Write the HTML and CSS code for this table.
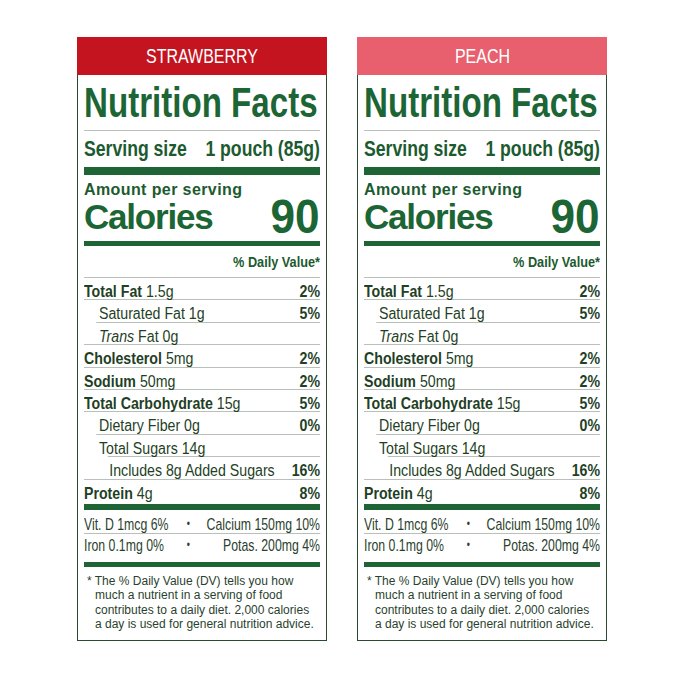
FILE: index.html
```html
<!DOCTYPE html>
<html>
<head>
<meta charset="utf-8">
<link rel="stylesheet" href="styles.css">
</head>
<body>
<div class="page">
  <section class="panel">
    <div class="flavor flavor-strawberry"><span class="flavor-text">STRAWBERRY</span></div>
    <div class="card">
      <h1 class="title">Nutrition Facts</h1>
      <div class="rule"></div>
      <div class="serving cond"><span>Serving size</span><span>1 pouch (85g)</span></div>
      <div class="bar bar-8"></div>
      <div class="amount">Amount per serving</div>
      <div class="calories"><span class="cal-label">Calories</span><span class="cal-num">90</span></div>
      <div class="bar bar-5"></div>
      <div class="dv cond">% Daily Value*</div>
      <div class="rows cond">
        <div class="row"><span><b>Total Fat</b> 1.5g</span><b>2%</b></div>
        <div class="row ind"><span>Saturated Fat 1g</span><b>5%</b></div>
        <div class="row ind-line"><span><i>Trans</i> Fat 0g</span></div>
        <div class="row"><span><b>Cholesterol</b> 5mg</span><b>2%</b></div>
        <div class="row"><span><b>Sodium</b> 50mg</span><b>2%</b></div>
        <div class="row"><span><b>Total Carbohydrate</b> 15g</span><b>5%</b></div>
        <div class="row ind"><span>Dietary Fiber 0g</span><b>0%</b></div>
        <div class="row ind-line"><span>Total Sugars 14g</span></div>
        <div class="row ind2"><span>Includes 8g Added Sugars</span><b>16%</b></div>
        <div class="row"><span><b>Protein</b> 4g</span><b>8%</b></div>
      </div>
      <div class="bar bar-6"></div>
      <div class="vits">
        <div class="vit vit-first"><span>Vit. D 1mcg 6%</span><span class="dot">•</span><span class="vr">Calcium 150mg 10%</span></div>
        <div class="vit vit-second"><span>Iron 0.1mg 0%</span><span class="dot">•</span><span class="vr">Potas. 200mg 4%</span></div>
      </div>
      <div class="bar bar-last"></div>
      <p class="foot">* The % Daily Value (DV) tells you how<br>much a nutrient in a serving of food<br>contributes to a daily diet. 2,000 calories<br>a day is used for general nutrition advice.</p>
    </div>
  </section>
  <section class="panel">
    <div class="flavor flavor-peach"><span class="flavor-text">PEACH</span></div>
    <div class="card">
      <h1 class="title">Nutrition Facts</h1>
      <div class="rule"></div>
      <div class="serving cond"><span>Serving size</span><span>1 pouch (85g)</span></div>
      <div class="bar bar-8"></div>
      <div class="amount">Amount per serving</div>
      <div class="calories"><span class="cal-label">Calories</span><span class="cal-num">90</span></div>
      <div class="bar bar-5"></div>
      <div class="dv cond">% Daily Value*</div>
      <div class="rows cond">
        <div class="row"><span><b>Total Fat</b> 1.5g</span><b>2%</b></div>
        <div class="row ind"><span>Saturated Fat 1g</span><b>5%</b></div>
        <div class="row ind-line"><span><i>Trans</i> Fat 0g</span></div>
        <div class="row"><span><b>Cholesterol</b> 5mg</span><b>2%</b></div>
        <div class="row"><span><b>Sodium</b> 50mg</span><b>2%</b></div>
        <div class="row"><span><b>Total Carbohydrate</b> 15g</span><b>5%</b></div>
        <div class="row ind"><span>Dietary Fiber 0g</span><b>0%</b></div>
        <div class="row ind-line"><span>Total Sugars 14g</span></div>
        <div class="row ind2"><span>Includes 8g Added Sugars</span><b>16%</b></div>
        <div class="row"><span><b>Protein</b> 4g</span><b>8%</b></div>
      </div>
      <div class="bar bar-6"></div>
      <div class="vits">
        <div class="vit vit-first"><span>Vit. D 1mcg 6%</span><span class="dot">•</span><span class="vr">Calcium 150mg 10%</span></div>
        <div class="vit vit-second"><span>Iron 0.1mg 0%</span><span class="dot">•</span><span class="vr">Potas. 200mg 4%</span></div>
      </div>
      <div class="bar bar-last"></div>
      <p class="foot">* The % Daily Value (DV) tells you how<br>much a nutrient in a serving of food<br>contributes to a daily diet. 2,000 calories<br>a day is used for general nutrition advice.</p>
    </div>
  </section>
</div>
</body>
</html>
```
FILE: styles.css
```css
html, body {
  margin: 0;
  padding: 0;
  background: #ffffff;
}
.page {
  display: flex;
  gap: 30px;
  padding: 37px 0 0 77px;
  font-family: "Liberation Sans", Arial, sans-serif;
  color: #1f3f26;
}
.panel {
  width: 250px;
  flex: none;
}
.flavor {
  height: 38px;
  display: flex;
  align-items: center;
  justify-content: center;
  color: #ffffff;
}
.flavor-text {
  display: inline-block;
  font-size: 20px;
  line-height: 20px;
  transform: scaleX(0.8);
}
.flavor-strawberry { background: #c4141f; }
.flavor-peach { background: #e8606e; }
.card {
  border: 1px solid #2b4a31;
  border-top: none;
  padding: 6px 6px 8px;
}
/* horizontally condensed blocks (Arial Narrow look) */
.cond {
  width: 121.95%;
  transform: scaleX(0.82);
  transform-origin: 0 0;
}
.title {
  margin: 0;
  width: 129.87%;
  transform: scaleX(0.77);
  transform-origin: 0 0;
  font-size: 43px;
  line-height: 43px;
  height: 43px;
  font-weight: bold;
  color: #1c6535;
  white-space: nowrap;
}
.rule {
  margin-top: 6px;
  height: 1px;
  background: #b9c0ba;
}
.serving {
  margin-top: 7px;
  height: 22px;
  line-height: 22px;
  font-size: 21.5px;
  font-weight: bold;
  color: #1c5a30;
  display: flex;
  justify-content: space-between;
  white-space: nowrap;
}
.bar { background: #1e6434; }
.bar-8 { margin-top: 7px; height: 8px; }
.bar-5 { margin-top: 7px; height: 5px; }
.bar-6 { margin-top: 3px; height: 6px; }
.bar-last { margin-top: 9px; height: 5px; }
.amount {
  margin-top: 7px;
  font-size: 16px;
  line-height: 15px;
  font-weight: bold;
  color: #1c5a30;
  letter-spacing: 0.4px;
  white-space: nowrap;
}
.calories {
  margin-top: 1px;
  height: 36px;
  display: flex;
  justify-content: space-between;
  align-items: center;
  color: #1c6535;
  font-weight: bold;
}
.cal-label {
  font-size: 35px;
  line-height: 35px;
  letter-spacing: -1.2px;
}
.cal-num {
  display: inline-block;
  font-size: 49px;
  line-height: 36px;
  transform: scaleX(0.9);
  transform-origin: 100% 50%;
}
.dv {
  margin-top: 8px;
  font-size: 15.5px;
  line-height: 16px;
  font-weight: bold;
  text-align: right;
  color: #1c5a30;
}
.rows { margin-top: 7px; }
.row {
  box-sizing: border-box;
  height: 22.4px;
  border-top: 1px solid #b9c0ba;
  padding-top: 6px;
  font-size: 17.3px;
  line-height: 15px;
  display: flex;
  justify-content: space-between;
  white-space: nowrap;
}
.row b { font-weight: bold; }
.row i { font-style: italic; }
.ind { padding-left: 18.3px; }
.ind-line { margin-left: 14.6px; padding-left: 3.7px; }
.ind2 { margin-left: 29.3px; padding-left: 1.5px; }
.vits {
  width: 133.33%;
  transform: scaleX(0.75);
  transform-origin: 0 0;
}
.vit {
  box-sizing: border-box;
  display: grid;
  grid-template-columns: 134px 10px 1fr;
  font-size: 16.4px;
  line-height: 16px;
  color: #2a3f2e;
  white-space: nowrap;
}
.vit-first {
  height: 23px;
  padding-top: 6px;
}
.vit-second {
  height: 20px;
  padding-top: 3px;
  border-top: 1px solid #b9c0ba;
}
.dot {
  text-align: center;
  font-size: 12px;
}
.vr { justify-self: end; }
.foot {
  margin: 7px 0 0;
  padding-left: 11px;
  text-indent: -8px;
  font-size: 12px;
  line-height: 14.4px;
  color: #2a3f2e;
  white-space: nowrap;
}
```
